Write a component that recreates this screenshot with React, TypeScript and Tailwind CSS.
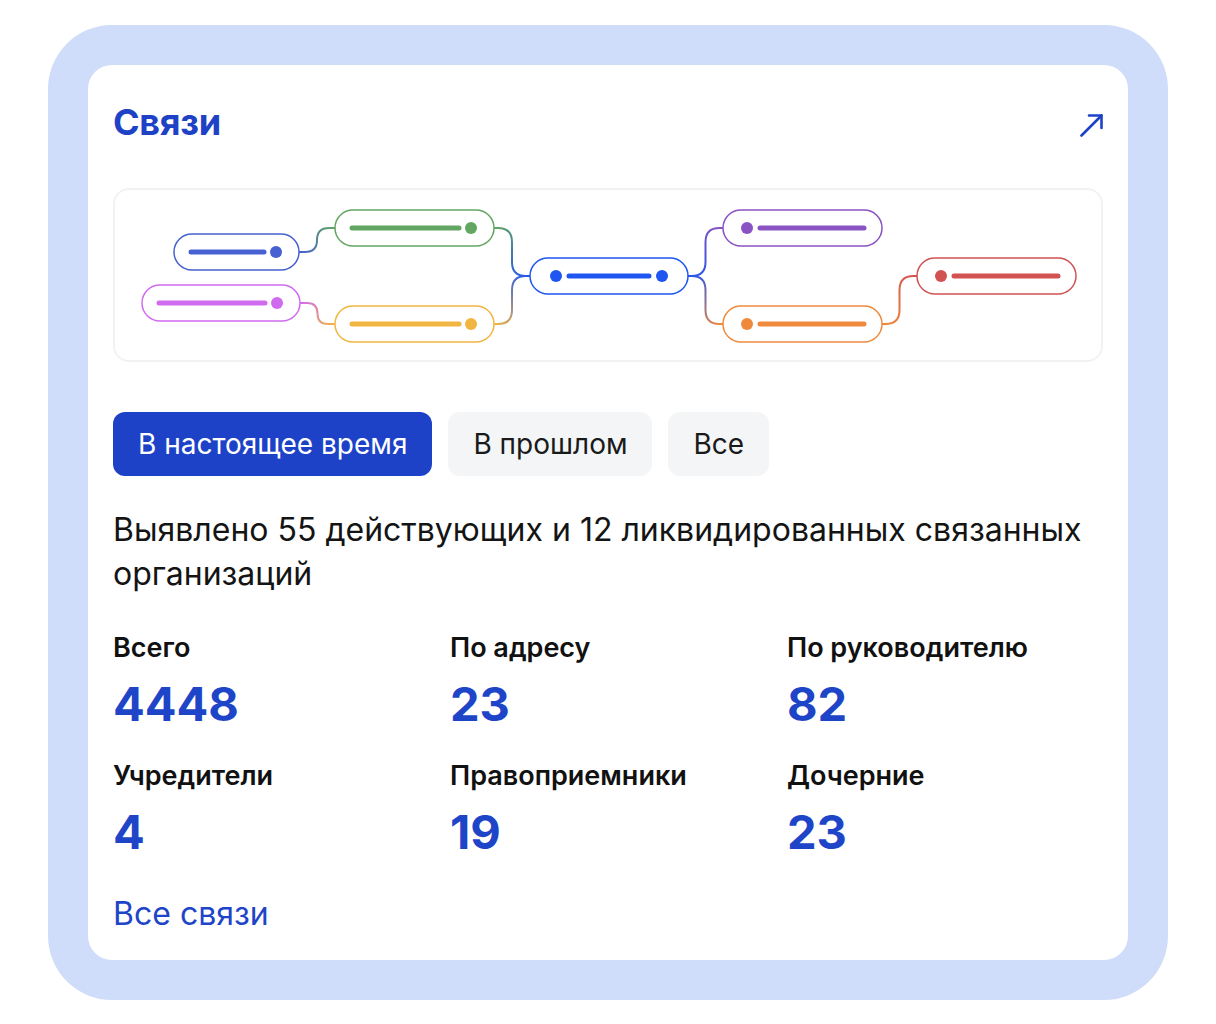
import React, { useState } from 'react';

type Node = {
  id: string;
  x: number;
  y: number;
  w: number;
  color: string;
  dots: 'left' | 'right' | 'both';
};

// Diagram coordinates are local to the 990x174 preview box
const nodes: Node[] = [
  { id: 'a', x: 61, y: 46, w: 125, color: '#4760d2', dots: 'right' },
  { id: 'b', x: 29, y: 97, w: 158, color: '#d06bf0', dots: 'right' },
  { id: 'c', x: 222, y: 22, w: 159, color: '#62a662', dots: 'right' },
  { id: 'd', x: 222, y: 118, w: 159, color: '#f1b542', dots: 'right' },
  { id: 'e', x: 417, y: 70, w: 158, color: '#1f55f0', dots: 'both' },
  { id: 'f', x: 610, y: 22, w: 159, color: '#8a52c2', dots: 'left' },
  { id: 'g', x: 610, y: 118, w: 159, color: '#ef8a3c', dots: 'left' },
  { id: 'h', x: 804, y: 70, w: 159, color: '#d25252', dots: 'left' },
];

const H = 36;

const links: [string, string][] = [
  ['a', 'c'],
  ['b', 'd'],
  ['c', 'e'],
  ['d', 'e'],
  ['e', 'f'],
  ['e', 'g'],
  ['g', 'h'],
];

const byId = (id: string) => nodes.find((n) => n.id === id)!;

function linkPath(from: Node, to: Node) {
  const x1 = from.x + from.w;
  const y1 = from.y + H / 2;
  const x2 = to.x;
  const y2 = to.y + H / 2;
  const mx = (x1 + x2) / 2;
  const r = Math.min(14, Math.abs(y2 - y1) / 2);
  const dir = y2 > y1 ? 1 : -1;
  return `M${x1} ${y1} H${mx - r} Q${mx} ${y1} ${mx} ${y1 + dir * r} V${y2 - dir * r} Q${mx} ${y2} ${mx + r} ${y2} H${x2}`;
}

const LinksDiagram: React.FC = () => (
  <svg width={986} height={170} viewBox="2 2 986 170" className="block">
    <defs>
      {links.map(([a, b]) => {
        const from = byId(a);
        const to = byId(b);
        return (
          <linearGradient
            key={`g-${a}${b}`}
            id={`g-${a}${b}`}
            gradientUnits="userSpaceOnUse"
            x1={from.x + from.w}
            y1={from.y + H / 2}
            x2={to.x}
            y2={to.y + H / 2}
          >
            <stop offset="0" stopColor={from.color} />
            <stop offset="1" stopColor={to.color} />
          </linearGradient>
        );
      })}
    </defs>
    {links.map(([a, b]) => (
      <path
        key={`${a}${b}`}
        d={linkPath(byId(a), byId(b))}
        fill="none"
        stroke={`url(#g-${a}${b})`}
        strokeWidth={2}
      />
    ))}
    {nodes.map((n) => {
      const cy = n.y + H / 2;
      let lineStart = n.x + 17;
      let lineEnd = n.x + n.w - 35;
      const dotXs: number[] = [];
      if (n.dots === 'right') {
        dotXs.push(n.x + n.w - 23);
      } else if (n.dots === 'left') {
        dotXs.push(n.x + 24);
        lineStart = n.x + 37;
        lineEnd = n.x + n.w - 18;
      } else {
        dotXs.push(n.x + 26, n.x + n.w - 26);
        lineStart = n.x + 39;
        lineEnd = n.x + n.w - 39;
      }
      return (
        <g key={n.id}>
          <rect
            x={n.x}
            y={n.y}
            width={n.w}
            height={H}
            rx={18}
            fill="#ffffff"
            stroke={n.color}
            strokeWidth={1.5}
          />
          <line
            x1={lineStart}
            y1={cy}
            x2={lineEnd}
            y2={cy}
            stroke={n.color}
            strokeWidth={5}
            strokeLinecap="round"
          />
          {dotXs.map((dx) => (
            <circle key={dx} cx={dx} cy={cy} r={6} fill={n.color} />
          ))}
        </g>
      );
    })}
  </svg>
);

const stats = [
  { label: 'Всего', value: '4448' },
  { label: 'По адресу', value: '23' },
  { label: 'По руководителю', value: '82' },
  { label: 'Учредители', value: '4' },
  { label: 'Правоприемники', value: '19' },
  { label: 'Дочерние', value: '23' },
];

const tabs = ['В настоящее время', 'В прошлом', 'Все'];

export default function App() {
  const [active, setActive] = useState(0);

  return (
    <div
      className="min-h-screen bg-white px-[48px] pt-[25px]"
      style={{ fontFamily: 'Inter, "Noto Sans", "Liberation Sans", sans-serif' }}
    >
      <div className="w-[1120px] rounded-[64px] bg-[#d0ddfa] p-[40px]">
        <div className="rounded-[24px] bg-white px-[25px] pt-[37px] pb-[26px]">
          {/* Header */}
          <div className="flex items-center justify-between">
            <h2 className="text-[36px] leading-[40px] font-bold text-[#1e42c6] tracking-[-0.3px]">
              Связи
            </h2>
            <button className="mt-[6px] text-[#1e42c6]">
              <svg width="23" height="23" viewBox="0 0 23 23" fill="none" stroke="currentColor" strokeWidth="2.6" strokeLinecap="round" strokeLinejoin="round">
                <path d="M1.5 21.5 L21.5 1.5" />
                <path d="M9 1.5 H21.5 V14" />
              </svg>
            </button>
          </div>

          {/* Preview */}
          <div className="mt-[46px] h-[174px] w-[990px] overflow-hidden rounded-[16px] border-2 border-[#f1f2f4] bg-white">
            <LinksDiagram />
          </div>

          {/* Tabs */}
          <div className="mt-[50px] flex gap-[16px]">
            {tabs.map((t, i) => (
              <button
                key={t}
                onClick={() => setActive(i)}
                className={`h-[64px] rounded-[12px] px-[25px] text-[28px] ${
                  i === active ? 'bg-[#1d42c8] text-white' : 'bg-[#f4f5f7] text-[#1a1a1a]'
                }`}
              >
                {t}
              </button>
            ))}
          </div>

          <p className="mt-[32px] text-[32px] leading-[44px] text-[#141414]">
            Выявлено 55 действующих и 12 ликвидированных связанных организаций
          </p>

          {/* Counters */}
          <div className="mt-[36px] grid grid-cols-[337px_337px_1fr] gap-y-[28px]">
            {stats.map((s) => (
              <div key={s.label}>
                <div className="text-[27px] leading-[32px] font-semibold text-[#111111]">{s.label}</div>
                <div className="mt-[12px] text-[47px] leading-[56px] font-bold text-[#1e45c8]">{s.value}</div>
              </div>
            ))}
          </div>

          <a className="mt-[34px] block text-[32px] leading-[40px] text-[#1e45c8]">Все связи</a>
        </div>
      </div>
    </div>
  );
}
